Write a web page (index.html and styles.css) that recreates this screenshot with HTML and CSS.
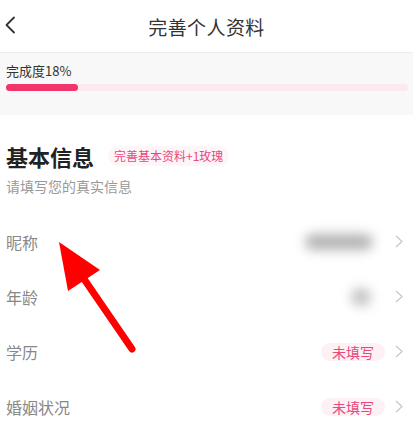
FILE: index.html
```html
<!DOCTYPE html>
<html lang="zh">
<head>
<meta charset="utf-8">
<link rel="stylesheet" href="styles.css">
</head>
<body>
<div class="page">
  <header class="topbar">
    <svg class="back" width="12" height="18" viewBox="0 0 12 18"><path d="M10 1.5 L2.5 9 L10 16.5" fill="none" stroke="#333" stroke-width="1.8" stroke-linecap="round" stroke-linejoin="round"/></svg>
    <h1 class="title">完善个人资料</h1>
  </header>
  <section class="progress">
    <div class="progress-label">完成度18%</div>
    <div class="track"><div class="fill" style="width:18%"></div></div>
  </section>
  <section class="basic">
    <div class="basic-head">
      <h2 class="basic-title">基本信息</h2>
      <span class="reward">完善基本资料+1玫瑰</span>
    </div>
    <div class="basic-sub">请填写您的真实信息</div>
    <div class="rows">
      <div class="row"><span class="label">昵称</span><span class="value"><span class="blur blur-long"></span></span><svg class="chev" width="8" height="13" viewBox="0 0 8 13"><path d="M1 1 L7 6.5 L1 12" fill="none" stroke="#c6c6c6" stroke-width="1.2" stroke-linejoin="round"/></svg></div>
      <div class="row"><span class="label">年龄</span><span class="value"><span class="blur blur-short"></span></span><svg class="chev" width="8" height="13" viewBox="0 0 8 13"><path d="M1 1 L7 6.5 L1 12" fill="none" stroke="#c6c6c6" stroke-width="1.2" stroke-linejoin="round"/></svg></div>
      <div class="row"><span class="label">学历</span><span class="value"><span class="empty">未填写</span></span><svg class="chev" width="8" height="13" viewBox="0 0 8 13"><path d="M1 1 L7 6.5 L1 12" fill="none" stroke="#c6c6c6" stroke-width="1.2" stroke-linejoin="round"/></svg></div>
      <div class="row"><span class="label">婚姻状况</span><span class="value"><span class="empty">未填写</span></span><svg class="chev" width="8" height="13" viewBox="0 0 8 13"><path d="M1 1 L7 6.5 L1 12" fill="none" stroke="#c6c6c6" stroke-width="1.2" stroke-linejoin="round"/></svg></div>
    </div>
  </section>
  <svg class="arrow" width="413" height="429" viewBox="0 0 413 429">
    <line x1="84" y1="279" x2="132" y2="349" stroke="#ff0000" stroke-width="7" stroke-linecap="round"/>
    <polygon points="59,242 100,270 68,291" fill="#ff0000"/>
  </svg>
</div>
</body>
</html>
```
FILE: styles.css
```css
* { box-sizing: border-box; margin: 0; padding: 0; }
html, body { background: #fff; }
body {
  width: 413px;
  height: 429px;
  overflow: hidden;
  font-family: "Noto Sans CJK SC", "Noto Sans", sans-serif;
  color: #333;
}
.page { position: relative; width: 413px; height: 429px; }
.topbar {
  position: relative;
  height: 53px;
  border-bottom: 1px solid #ececec;
  display: flex;
  align-items: center;
  justify-content: center;
}
.back { position: absolute; left: 4px; top: 16px; }
.title { font-size: 19px; font-weight: 400; color: #333; letter-spacing: 0.4px; }
.progress {
  background: #f8f8f8;
  padding: 9px 5px 24px 6px;
}
.progress-label { font-size: 13px; line-height: 18px; color: #333; }
.track {
  margin-top: 4px;
  height: 7px;
  border-radius: 4px;
  background: #fde8ef;
}
.fill { height: 7px; border-radius: 4px; background: #f1356b; }
.basic { padding: 26px 5px 0 6px; }
.basic-head { display: flex; align-items: center; gap: 14px; height: 30px; }
.basic-title { font-size: 22px; font-weight: 700; color: #222; line-height: 30px; }
.reward {
  font-size: 12px;
  line-height: 20px;
  color: #e8487c;
  background: #fef5f8;
  padding: 0 6px;
  border-radius: 10px;
}
.basic-sub { margin-top: 5px; font-size: 14px; line-height: 20px; color: #999; }
.rows { margin-top: 18px; }
.row { display: flex; align-items: center; height: 55px; }
.label { font-size: 16px; color: #888; flex: 1; }
.value { display: flex; align-items: center; }
.blur { display: block; background: #9a9a9a; filter: blur(6px); border-radius: 9px; }
.blur-long { width: 68px; height: 16px; margin-right: 22px; opacity: 0.75; }
.blur-short { width: 20px; height: 18px; margin-right: 24px; opacity: 0.6; }
.empty {
  font-size: 14px;
  line-height: 18px;
  color: #e8487c;
  background: #fef1f5;
  padding: 0 11px;
  border-radius: 9px;
  margin-right: 10px;
}
.chev { display: block; margin-right: 5px; }
.arrow { position: absolute; left: 0; top: 0; pointer-events: none; }
```
